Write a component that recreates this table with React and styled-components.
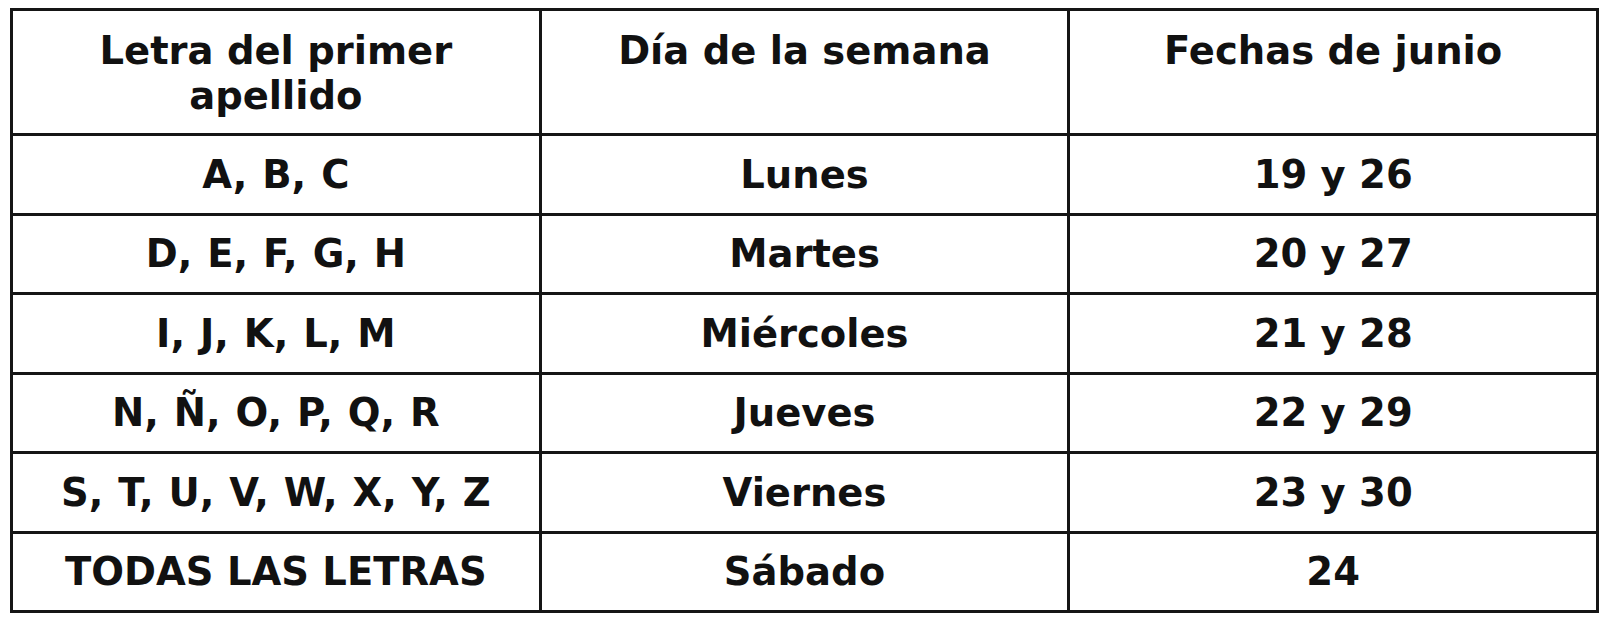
import styled, { createGlobalStyle } from "styled-components";

const GlobalStyle = createGlobalStyle`
  * {
    box-sizing: border-box;
  }

  body {
    margin: 0;
    background: #fff;
    font-family: "DejaVu Sans", "Liberation Sans", sans-serif;
    color: #111;
  }
`;

const Page = styled.div`
  padding: 8px 0 0 10px;
`;

const Table = styled.table`
  width: 1589px;
  border-collapse: collapse;
  table-layout: fixed;
  border: 3px solid #151515;
`;

const HeadCell = styled.th`
  width: 33.33%;
  height: 125px;
  padding: 17px 20px 0;
  vertical-align: top;
  text-align: center;
  font-size: 38.5px;
  line-height: 45px;
  font-weight: 700;
  border: 3px solid #151515;
`;

const Row = styled.tr`
  height: 79.5px;
`;

const Cell = styled.td`
  padding: 0 8px;
  vertical-align: middle;
  text-align: center;
  font-size: 38.5px;
  font-weight: 700;
  white-space: nowrap;
  border: 3px solid #151515;
`;

const Wide = styled.span`
  word-spacing: ${(p) => p.$spread || 0}px;
`;

const rows = [
  ["A, B, C", "Lunes", "19 y 26"],
  ["D, E, F, G, H", "Martes", "20 y 27"],
  ["I, J, K, L, M", "Miércoles", "21 y 28"],
  ["N, Ñ, O, P, Q, R", "Jueves", "22 y 29"],
  ["S, T, U, V, W, X, Y, Z", "Viernes", "23 y 30"],
  ["TODAS LAS LETRAS", "Sábado", "24"],
];

const App = () => {
  return (
    <>
      <GlobalStyle />
      <Page>
        <Table>
          <thead>
            <tr>
              <HeadCell>Letra del primer apellido</HeadCell>
              <HeadCell>Día de la semana</HeadCell>
              <HeadCell>Fechas de junio</HeadCell>
            </tr>
          </thead>
          <tbody>
            {rows.map((r) => (
              <Row key={r[0]}>
                {r.map((c, i) => (
                  <Cell key={c}>
                    <Wide $spread={i === 0 && c.includes(",") ? 1.5 : 0}>{c}</Wide>
                  </Cell>
                ))}
              </Row>
            ))}
          </tbody>
        </Table>
      </Page>
    </>
  );
};

export default App;
